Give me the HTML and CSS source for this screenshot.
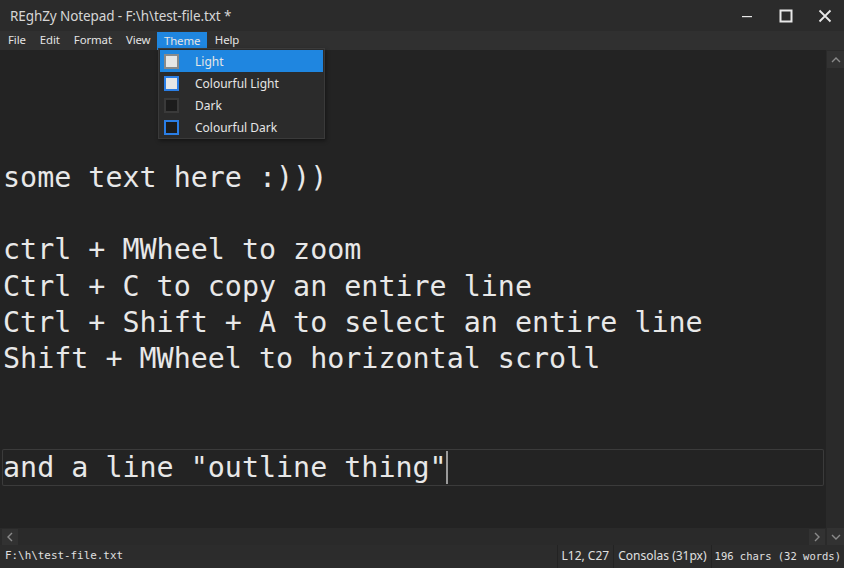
FILE: index.html
```html
<!DOCTYPE html>
<html>
<head>
<meta charset="utf-8">
<link rel="stylesheet" href="styles.css">
</head>
<body>
<div class="window">
  <div class="titlebar">
    <div class="title">REghZy Notepad - F:\h\test-file.txt *</div>
    <div class="winbtns">
      <div class="winbtn"><svg width="12" height="12" viewBox="0 0 12 12"><rect x="1" y="6" width="10" height="1.2" fill="#e8e8e8"/></svg></div>
      <div class="winbtn"><svg width="14" height="14" viewBox="0 0 14 14"><rect x="1.5" y="1.5" width="11" height="11" fill="none" stroke="#e8e8e8" stroke-width="2"/></svg></div>
      <div class="winbtn"><svg width="14" height="14" viewBox="0 0 14 14"><path d="M1.5 1.5 L12.5 12.5 M12.5 1.5 L1.5 12.5" stroke="#e8e8e8" stroke-width="1.8"/></svg></div>
    </div>
  </div>
  <div class="menubar">
    <span class="mitem">File</span>
    <span class="mitem">Edit</span>
    <span class="mitem">Format</span>
    <span class="mitem">View</span>
    <span class="mitem active">Theme</span>
    <span class="mitem">Help</span>
  </div>
  <div class="main">
    <div class="editor">
      <div class="line"></div>
      <div class="line"></div>
      <div class="line"></div>
      <div class="line">some text here :)))</div>
      <div class="line"></div>
      <div class="line">ctrl + MWheel to zoom</div>
      <div class="line">Ctrl + C to copy an entire line</div>
      <div class="line">Ctrl + Shift + A to select an entire line</div>
      <div class="line">Shift + MWheel to horizontal scroll</div>
      <div class="line"></div>
      <div class="line"></div>
      <div class="line current">and a line "outline thing"<span class="caret"></span></div>
    </div>
    <div class="vscroll">
      <div class="sbtn"><svg width="10" height="8" viewBox="0 0 10 8"><path d="M1 6 L5 2 L9 6" fill="none" stroke="#8a8a8a" stroke-width="1.4"/></svg></div>
      <div class="strack"></div>
      <div class="sbtn"><svg width="10" height="8" viewBox="0 0 10 8"><path d="M1 2 L5 6 L9 2" fill="none" stroke="#8a8a8a" stroke-width="1.4"/></svg></div>
    </div>
    <div class="hscroll">
      <div class="sbtn"><svg width="8" height="10" viewBox="0 0 8 10"><path d="M6 1 L2 5 L6 9" fill="none" stroke="#8a8a8a" stroke-width="1.4"/></svg></div>
      <div class="htrack"></div>
      <div class="sbtn"><svg width="8" height="10" viewBox="0 0 8 10"><path d="M2 1 L6 5 L2 9" fill="none" stroke="#8a8a8a" stroke-width="1.4"/></svg></div>
    </div>
  </div>
  <div class="statusbar">
    <div class="path">F:\h\test-file.txt</div>
    <div class="seg">L12, C27</div>
    <div class="seg">Consolas (31px)</div>
    <div class="seg mono">196 chars (32 words)</div>
  </div>

  <div class="dropdown">
    <div class="ditem hl"><span class="sw sw-light"></span><span>Light</span></div>
    <div class="ditem"><span class="sw sw-clight"></span><span>Colourful Light</span></div>
    <div class="ditem"><span class="sw sw-dark"></span><span>Dark</span></div>
    <div class="ditem"><span class="sw sw-cdark"></span><span>Colourful Dark</span></div>
  </div>
</div>
</body>
</html>
```
FILE: styles.css
```css
* { box-sizing: border-box; }
html, body { margin: 0; padding: 0; }
body { width: 844px; height: 568px; overflow: hidden; background: #232323; font-family: "Noto Sans", "Open Sans", sans-serif; }
.window { position: relative; width: 844px; height: 568px; display: flex; flex-direction: column; }

.titlebar { height: 31px; background: #2b2b2b; display: flex; align-items: center; justify-content: space-between; }
.title { padding-left: 10px; color: #d6d6d6; font-size: 13.5px; letter-spacing: -0.1px; }
.winbtns { display: flex; height: 31px; }
.winbtn { width: 39px; display: flex; align-items: center; justify-content: center; }

.menubar { height: 19px; background: #303030; display: flex; align-items: stretch; padding-left: 1px; }
.mitem { color: #e4e4e4; font-size: 11.4px; line-height: 18px; padding: 0 7px; letter-spacing: -0.1px; }
.mitem.active { background: #1f86e0; margin: 1px 1px 0 0; line-height: 17px; padding: 0 6.5px; }

.main { flex: 1; display: grid; grid-template-columns: 826px 18px; grid-template-rows: 1fr 17px; min-height: 0; }
.editor { grid-column: 1; grid-row: 1; background: #232323; font-family: "DejaVu Sans Mono", "Liberation Mono", monospace; font-size: 28.35px; color: #e8e8e8; overflow: hidden; }
.line { height: 36.3px; line-height: 34.3px; padding-top: 2px; padding-left: 3px; white-space: pre; }
.line.current { margin: 0 2px; padding-left: 1px; box-shadow: inset 0 0 0 1px #3b3b3b; border-radius: 2px; height: 37px; }
.caret { display: inline-block; width: 2px; height: 33px; background: #9a9a9a; vertical-align: middle; margin-top: -4px; margin-left: -1px; }

.vscroll { grid-column: 2; grid-row: 1 / span 2; background: #2a2a2a; display: flex; flex-direction: column; padding: 1px 0 0 0; }
.vscroll .sbtn { height: 17px; width: 17px; margin-left: 1px; }
.strack { flex: 1; }
.sbtn { background: #323232; display: flex; align-items: center; justify-content: center; }
.hscroll { grid-column: 1; grid-row: 2; background: #2a2a2a; display: flex; padding: 1px 1px 0 2px; }
.hscroll .sbtn { width: 16px; height: 16px; }
.htrack { flex: 1; }

.statusbar { height: 23px; background: #2c2c2c; display: flex; align-items: stretch; color: #e0e0e0; }
.path { flex: 1; font-family: "DejaVu Sans Mono", "Liberation Mono", monospace; font-size: 10.9px; line-height: 22px; padding-left: 5px; }
.seg { font-size: 12px; line-height: 22px; padding: 0 4px; border-left: 1px solid #232323; }
.seg.mono { font-family: "DejaVu Sans Mono", "Liberation Mono", monospace; font-size: 10.5px; padding: 0 3px 0 3px; }

.dropdown { position: absolute; left: 158px; top: 48px; width: 167px; height: 91px; background: #2b2b2b; border: 1px solid #3a3a3a; padding: 1px; box-shadow: 1px 2px 4px rgba(0,0,0,0.4); }
.ditem { height: 22px; display: flex; align-items: center; color: #e6e6e6; font-size: 12px; }
.ditem.hl { background: #1f86e0; }
.sw { width: 15px; height: 15px; margin-left: 4px; margin-right: 16px; border: 2px solid #777; }
.sw-light { background: #e6e6e6; border-color: #8a8a8a; }
.sw-clight { background: #e6e6e6; border-color: #2a7ee6; }
.sw-dark { background: #1c1c1c; border-color: #3a3a3a; }
.sw-cdark { background: #1c1c1c; border-color: #2a7ee6; }
```
